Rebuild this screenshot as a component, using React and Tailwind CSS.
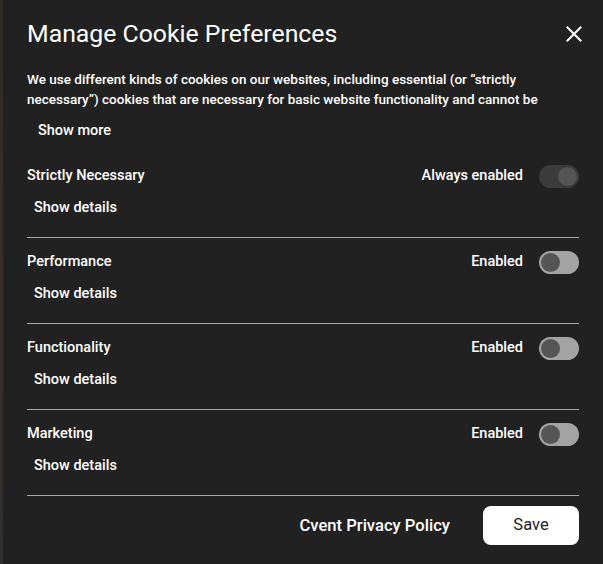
import React, { useState } from 'react';

const categories = [
  { name: 'Strictly Necessary', status: 'Always enabled', locked: true },
  { name: 'Performance', status: 'Enabled' },
  { name: 'Functionality', status: 'Enabled' },
  { name: 'Marketing', status: 'Enabled' },
];

const Toggle = ({ locked }) => {
  if (locked) {
    return (
      <div className="w-[40px] h-[23px] rounded-full bg-[#3b3b3b] flex items-center justify-end px-[2px]">
        <div className="w-[19px] h-[19px] rounded-full bg-[#555555]" />
      </div>
    );
  }
  return (
    <div className="w-[40px] h-[23px] rounded-full bg-[#a3a3a3] flex items-center px-[2px]">
      <div className="w-[19px] h-[19px] rounded-full bg-[#555555]" />
    </div>
  );
};

export default function App() {
  const [expanded, setExpanded] = useState(false);

  return (
    <div
      className="flex w-[603px] h-[564px] bg-[#212121] text-white"
      style={{ fontFamily: 'Roboto, "Liberation Sans", sans-serif' }}
    >
      {/* blurred page edge behind the dialog */}
      <div className="w-[3px] h-full bg-gradient-to-b from-[#2e2a24] via-[#3a2f2a] to-[#2f2f2f]" />

      <div className="flex-1 flex flex-col pl-6 pr-6">
        {/* Header */}
        <div className="flex items-center justify-between pt-[18px] h-[50px]">
          <h2 className="text-[24.8px] leading-[32px] font-normal">Manage Cookie Preferences</h2>
          <button className="mr-[-3px] p-0 flex">
            <svg width="16" height="16" viewBox="0 0 16 16">
              <path d="M1.5 1.5 L14.5 14.5 M14.5 1.5 L1.5 14.5" stroke="white" strokeWidth="2" strokeLinecap="square" />
            </svg>
          </button>
        </div>

        {/* Intro */}
        <p className="mt-[19px] text-[13.5px] leading-[20px] font-medium overflow-hidden h-[40px]">
          <span className="block whitespace-nowrap">
            We use different kinds of cookies on our websites, including essential (or “strictly
          </span>
          <span className="block whitespace-nowrap">
            necessary”) cookies that are necessary for basic website functionality and cannot be
          </span>
        </p>
        <div className="mt-[12px] flex">
          <button
            onClick={() => setExpanded(!expanded)}
            className="px-[11px] text-[14.5px] leading-[20px] font-medium"
          >
            Show more
          </button>
        </div>

        {/* Categories */}
        <div className="mt-[23px] flex flex-col">
          {categories.map((cat, i) => (
            <div key={cat.name} className={`flex flex-col ${i > 0 ? 'pt-[12px]' : ''}`}>
              <div className="flex items-center justify-between h-[24px]">
                <span className="text-[14.5px] leading-[20px] font-medium">{cat.name}</span>
                <div className="flex items-center gap-4">
                  <span className="text-[14.5px] leading-[20px] font-medium">{cat.status}</span>
                  <Toggle locked={cat.locked} />
                </div>
              </div>
              <div className="mt-[10px] flex">
                <button className="px-[7px] text-[14.5px] leading-[20px] font-medium">Show details</button>
              </div>
              <div className="mt-[19px] h-px bg-[#a8a8a8]" />
            </div>
          ))}
        </div>

        {/* Footer */}
        <div className="flex items-center justify-end gap-[33px] mt-[10px]">
          <a className="text-[16.6px] leading-[20px] font-medium">Cvent Privacy Policy</a>
          <button className="w-[96px] h-[39px] rounded-lg bg-white text-[#222] text-[16.5px] font-normal">
            Save
          </button>
        </div>
      </div>
    </div>
  );
}
